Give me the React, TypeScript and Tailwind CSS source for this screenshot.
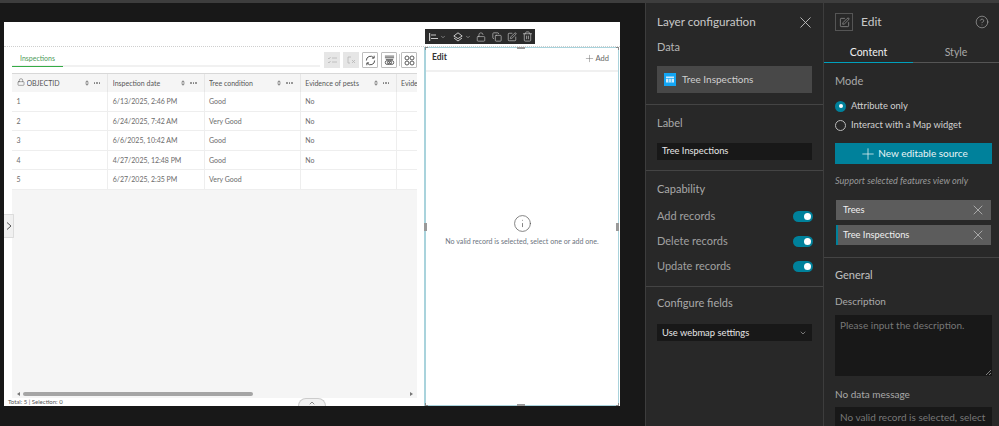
import React from "react";
import { Plus, X, ChevronDown, ChevronUp, Info, Lock, LockOpen, Copy, Trash2, SquarePen, CircleHelp } from "lucide-react";

const rows = [
  ["1", "6/13/2025, 2:46 PM", "Good", "No"],
  ["2", "6/24/2025, 7:42 AM", "Very Good", "No"],
  ["3", "6/6/2025, 10:42 AM", "Good", "No"],
  ["4", "4/27/2025, 12:48 PM", "Good", "No"],
  ["5", "6/27/2025, 2:35 PM", "Very Good", ""],
];

function HeadCell({ label, lock }: { label: string; lock?: boolean }) {
  return (
    <div className="w-[96.25px] shrink-0 h-full flex items-center pl-[4.5px] pr-[7px] border-r border-[#e6e6e6] text-[#555]">
      {lock && <Lock size={8} strokeWidth={1.5} className="mr-[2px] -mt-[2px] text-[#555]" />}
      <span className="flex-1 truncate">{label}</span>
      <span className="flex flex-col mr-[5px]">
        <svg width="4" height="6" viewBox="0 0 5 7"><path d="M2.5 0L5 3H0zM2.5 7L0 4h5z" fill="#888" /></svg>
      </span>
      <span className="flex gap-[1px]">
        <i className="w-[1.5px] h-[1.5px] rounded-full bg-[#777]" />
        <i className="w-[1.5px] h-[1.5px] rounded-full bg-[#777]" />
        <i className="w-[1.5px] h-[1.5px] rounded-full bg-[#777]" />
      </span>
    </div>
  );
}

function ToolBtn({ children, disabled }: { children: React.ReactNode; disabled?: boolean }) {
  return (
    <div className={disabled ? "w-[16px] h-[16px] bg-[#e6e6e6] flex items-center justify-center" : "w-[16px] h-[16px] bg-white border border-[#bdbdbd] rounded-[1px] flex items-center justify-center"}>
      {children}
    </div>
  );
}

function Toggle({ label }: { label: string }) {
  return (
    <div className="flex items-center justify-between h-[25.3px] text-[11px]">
      <span className="text-[#a0a0a0]">{label}</span>
      <span className="w-[20px] h-[11px] rounded-full bg-[#00819b] flex items-center justify-end pr-[2px]">
        <i className="w-[7px] h-[7px] rounded-full bg-white" />
      </span>
    </div>
  );
}

function Chip({ label, active }: { label: string; active?: boolean }) {
  return (
    <div className={`h-[20px] shrink-0 bg-[#5c5c5c] flex items-center justify-between pr-[5px] text-[#f0f0f0] text-[9.3px] ${active ? "border-l-2 border-[#00819b] pl-[5px]" : "pl-[7px]"}`}>
      <span>{label}</span>
      <X size={16} strokeWidth={1} className="text-[#cfcfcf]" />
    </div>
  );
}

function Corner({ className }: { className: string }) {
  return <i className={`absolute w-[3px] h-[3px] border-[#888] ${className}`} />;
}

export default function App() {
  return (
    <div className="w-[999px] h-[426px] overflow-hidden bg-[#181818] flex flex-col text-[10px] font-['Lato','Noto_Sans',sans-serif]">
      <div className="h-[3px] shrink-0 bg-[#3d3d3d]" />
      <div className="flex-1 flex min-h-0">
        {/* canvas */}
        <div className="w-[645px] shrink-0 pl-[4px] pt-[19px]">
          <div className="relative w-[616px] h-[384px] bg-white flex flex-col text-[7px]">
            <div className="h-[25px] shrink-0 border-b border-dotted border-[#cfcfcf]" />
            <div className="flex-1 flex min-h-0">
              {/* table widget */}
              <div className="w-[420px] shrink-0 flex flex-col">
                <div className="flex-1 flex flex-col pl-[8px] pr-[7px] min-h-0">
                  <div className="h-[26px] shrink-0 flex items-start pt-[5px]">
                    <div className="flex-1 h-[15px] flex border-b-[2px] border-[#f1f1f1] mr-[4px]">
                      <div className="w-[51px] h-[15px] border-b-[1.5px] border-[#35ac46] text-center text-[#4d9a57] leading-[12px]">Inspections</div>
                    </div>
                    <div className="flex items-center">
                      <div className="flex gap-[3px]">
                        <ToolBtn disabled><svg width="9" height="7" viewBox="0 0 9 7" fill="none" stroke="#b5b5b5" strokeWidth="0.8"><path d="M0 1l1 1 1.5-2M4 1h5M0 5l1 1 1.5-2M4 5h5" /></svg></ToolBtn>
                        <ToolBtn disabled><svg width="8" height="8" viewBox="0 0 8 8" fill="none" stroke="#b5b5b5" strokeWidth="0.8"><path d="M4 1H1v6h2M5 4l3 3M8 4L5 7" /></svg></ToolBtn>
                        <ToolBtn>
                          <svg width="11" height="11" viewBox="0 0 12 12" fill="none" stroke="#444" strokeWidth="1"><path d="M1.5 6A4.5 4.5 0 0 1 9.5 3M10.5 6A4.5 4.5 0 0 1 2.5 9" /><path d="M10 .8V3.4H7.6M2 11.2V8.6h2.4" /></svg>
                        </ToolBtn>
                        <ToolBtn>
                          <svg width="11" height="11" viewBox="0 0 12 12" fill="none" stroke="#444" strokeWidth="0.9"><path d="M1 1.2h10M1 3h10M2 4.8h8" /><circle cx="3.6" cy="8.2" r="2.2" /><circle cx="6" cy="8.2" r="2.2" /><circle cx="8.4" cy="8.2" r="2.2" /></svg>
                        </ToolBtn>
                      </div>
                      <span className="w-px h-[12px] bg-[#ccc] mx-[1.5px]" />
                      <ToolBtn>
                        <svg width="11" height="11" viewBox="0 0 10 10" fill="none" stroke="#444" strokeWidth="0.8"><circle cx="2.7" cy="2.7" r="1.8" /><circle cx="7.3" cy="2.7" r="1.8" /><circle cx="2.7" cy="7.3" r="1.8" /><circle cx="7.3" cy="7.3" r="1.8" /></svg>
                      </ToolBtn>
                    </div>
                  </div>
                  <div className="flex-1 bg-[#f5f5f5] relative overflow-hidden">
                    <div className="h-[19px] bg-[#f5f5f5] border-t border-[#d8d8d8] flex whitespace-nowrap">
                      <HeadCell label="OBJECTID" lock />
                      <HeadCell label="Inspection date" />
                      <HeadCell label="Tree condition" />
                      <HeadCell label="Evidence of pests" />
                      <div className="pl-[4px] flex items-center text-[#555]">Evide</div>
                    </div>
                    {rows.map((r) => (
                      <div key={r[0]} className="h-[19.6px] bg-white border-b border-[#eeeeee] flex text-[#6b6b6b]">
                        {r.map((c, i) => (
                          <div key={i} className="w-[96.25px] shrink-0 pl-[4.5px] flex items-center border-r border-[#eeeeee]">{c}</div>
                        ))}
                        <div className="flex-1" />
                      </div>
                    ))}
                    <div className="absolute left-0 right-0 bottom-[1px] h-[6px] flex items-center">
                      <span className="w-0 h-0 ml-[5px] border-y-[2.5px] border-y-transparent border-r-[3px] border-r-[#777]" />
                      <span className="ml-[3px] w-[230px] h-[4px] rounded-full bg-[#a5a5a5]" />
                      <span className="flex-1" />
                      <span className="w-0 h-0 mr-[4px] border-y-[2.5px] border-y-transparent border-l-[3px] border-l-[#777]" />
                    </div>
                  </div>
                </div>
                <div className="h-[8px] shrink-0 pl-[4px] text-[6px] leading-[8px] text-[#555] bg-white">Total: 5 | Selection: 0</div>
              </div>
              {/* edit widget */}
              <div className="flex-1 mr-[1px] border-l-2 border-r border-y border-[#a9d3dc] flex flex-col relative">
                <div className="h-[24px] shrink-0 border-b-2 border-[#f0f0f0] flex items-start justify-between pl-[6px] pr-[9px] pt-[3px]">
                  <span className="text-[8.5px] font-bold text-[#333]">Edit</span>
                  <span className="flex items-center gap-[1px] text-[#666] text-[7.5px] mt-[2px]"><Plus size={11} strokeWidth={1} />Add</span>
                </div>
                <div className="flex-1 flex flex-col items-center pt-[142px] text-[#6c7480]">
                  <Info size={19} strokeWidth={0.9} className="text-[#555]" />
                  <div className="mt-[4px] text-[7.1px]">No valid record is selected, select one or add one.</div>
                </div>
                <i className="absolute -left-[2px] top-[175px] w-[3px] h-[8px] bg-[#999]" />
                <i className="absolute -right-[1px] top-[175px] w-[3px] h-[8px] bg-[#999]" />
                <i className="absolute left-[91px] -top-[1px] w-[8px] h-[2px] bg-[#999]" />
                <i className="absolute left-[91px] -bottom-[1px] w-[8px] h-[2px] bg-[#999]" />
                <Corner className="-left-[1px] -top-[1px] border-l border-t" />
                <Corner className="-right-[1px] -top-[1px] border-r border-t" />
                <Corner className="-left-[1px] -bottom-[1px] border-l border-b" />
                <Corner className="-right-[1px] -bottom-[1px] border-r border-b" />
              </div>
            </div>
            {/* side handle */}
            <div className="absolute left-0 top-[192px] w-[10px] h-[24px] bg-[#f0f0f0] border border-l-0 border-[#dcdcdc] rounded-r-[1px] flex items-center justify-center">
              <svg width="6" height="8" viewBox="0 0 6 8" fill="none" stroke="#555" strokeWidth="1"><path d="M1 .5L5 4 1 7.5" /></svg>
            </div>
            {/* bottom handle */}
            <div className="absolute left-[294px] bottom-0 w-[28px] h-[8px] bg-[#f1f1f1] border border-b-0 border-[#ccc] rounded-t-full flex items-center justify-center">
              <ChevronUp size={8} className="text-[#555]" />
            </div>
            {/* floating toolbar */}
            <div className="absolute left-[421px] top-[7px] w-[110px] h-[15px] bg-[#2b2b2b] flex items-center pl-[4px] text-[#c8c8c8]">
              <svg width="9" height="8" viewBox="0 0 9 8" fill="none" stroke="#c8c8c8" strokeWidth="1.2"><path d="M.6 0v8M2 2h5M2 5.5h7" /></svg>
              <ChevronDown size={6} className="ml-[2px]" />
              <svg className="ml-[7px]" width="10" height="10" viewBox="0 0 10 10" fill="none" stroke="#c8c8c8" strokeWidth="1"><path d="M5 .8L9.2 4 5 6.6.8 4zM1 6l4 3 4-3" /></svg>
              <ChevronDown size={6} className="ml-[2px]" />
              <LockOpen size={10} strokeWidth={1.5} className="ml-[5px]" />
              <Copy size={10} strokeWidth={1.6} className="ml-[6px]" />
              <SquarePen size={10} strokeWidth={1.6} className="ml-[5px]" />
              <Trash2 size={11} strokeWidth={1.5} className="ml-[5px]" />
            </div>
          </div>
        </div>
        {/* layer config */}
        <div className="w-[179px] shrink-0 bg-[#282828] border-x border-[#3d3d3d] text-[#a8a8a8] flex flex-col">
          <div className="pt-[11px] px-[11px] pb-[11px] border-b border-[#444]">
            <div className="flex items-center justify-between h-[16px] text-[11.7px] text-[#c8c8c8]">
              <span>Layer configuration</span>
              <X size={19} strokeWidth={1.1} className="text-[#c8c8c8] -mr-[3px]" />
            </div>
            <div className="mt-[9px] text-[11px] text-[#b5b5b5]">Data</div>
            <div className="mt-[10px] h-[27px] bg-[#484848] flex items-center pl-[7px] text-[10px] text-[#cfcfcf]">
              <svg className="mr-[6px]" width="12" height="13" viewBox="0 0 12 13"><rect width="12" height="13" fill="#12a5f4" /><rect x="2" y="3.5" width="8" height="6" fill="#cdeafc" /><path d="M2 5.5h8M4.7 5.5v4M7.3 5.5v4" stroke="#12a5f4" strokeWidth="0.7" /></svg>
              Tree Inspections
            </div>
          </div>
          <div className="pt-[10px] px-[11px] pb-[10px] border-b border-[#444]">
            <div className="text-[11px] leading-[16px]">Label</div>
            <div className="mt-[12px] h-[17px] bg-[#181818] flex items-center pl-[5px] text-[9.3px] text-[#e6e6e6]">Tree Inspections</div>
          </div>
          <div className="pt-[10px] pl-[11px] pr-[10px] pb-[7px] border-b border-[#444]">
            <div className="text-[11px] leading-[16px] mb-[7px]">Capability</div>
            <Toggle label="Add records" />
            <Toggle label="Delete records" />
            <Toggle label="Update records" />
          </div>
          <div className="pt-[8px] px-[11px]">
            <div className="text-[11px] leading-[16px]">Configure fields</div>
            <div className="mt-[13px] h-[17px] bg-[#181818] flex items-center justify-between pl-[5px] pr-[5px] text-[9.4px] text-[#e6e6e6]">
              Use webmap settings
              <ChevronDown size={8} className="text-[#a8a8a8]" />
            </div>
          </div>
        </div>
        {/* edit panel */}
        <div className="flex-1 bg-[#282828] text-[#a8a8a8] flex flex-col overflow-hidden">
          <div className="h-[29px] shrink-0 mt-[10px] flex items-start pl-[11px] pr-[8px]">
            <span className="w-[18px] h-[18px] border border-[#555] flex items-center justify-center text-[#bbb]"><SquarePen size={11} strokeWidth={1.2} /></span>
            <span className="ml-[8px] text-[12px] leading-[18px] text-[#c8c8c8]">Edit</span>
            <span className="flex-1" />
            <CircleHelp size={14} strokeWidth={1} className="mt-[2px] mr-[2px] text-[#bbb]" />
          </div>
          <div className="flex h-[21px] shrink-0 text-[10.5px] border-b border-[#555]">
            <div className="w-[89px] text-center text-[#f0f0f0] border-b border-[#00a0bd] leading-[20px] h-[21px]">Content</div>
            <div className="flex-1 text-center leading-[20px]">Style</div>
          </div>
          <div className="px-[11px] shrink-0">
            <div className="mt-[10px] text-[11px] leading-[16px]">Mode</div>
            <div className="mt-[11px] flex items-center h-[12px] text-[9.4px] text-[#d0d0d0]">
              <span className="w-[11px] h-[11px] rounded-full bg-[#00819b] flex items-center justify-center mr-[5px]"><i className="w-[4px] h-[4px] rounded-full bg-white" /></span>
              Attribute only
            </div>
            <div className="mt-[7px] flex items-center h-[12px] text-[9.4px] text-[#d0d0d0]">
              <span className="w-[11px] h-[11px] rounded-full border border-[#bbb] mr-[5px]" />
              Interact with a Map widget
            </div>
            <div className="mt-[12px] h-[21px] w-[157px] bg-[#00819b] flex items-center justify-center text-[#e8f4f6] text-[10px]">
              <Plus size={18} strokeWidth={1} className="mr-[1px]" />New editable source
            </div>
            <div className="mt-[11px] italic text-[9.1px] leading-[12px] text-[#999]">Support selected features view only</div>
            <div className="mt-[13px] ml-[1px] w-[155px] flex flex-col gap-[5px]">
              <Chip label="Trees" />
              <Chip label="Tree Inspections" active />
            </div>
          </div>
          <div className="mt-[12px] shrink-0 border-t border-[#444] px-[11px] pt-[9px]">
            <div className="text-[11px] leading-[16px] text-[#c0c0c0]">General</div>
            <div className="mt-[11px] leading-[14px]">Description</div>
            <div className="mt-[7px] w-[157px] h-[61px] bg-[#181818] relative px-[5px] pt-[3px] text-[#777] leading-[14px]">
              Please input the description.
              <svg className="absolute right-[1px] bottom-[1px]" width="5" height="5" viewBox="0 0 5 5" stroke="#aaa" strokeWidth="0.7"><path d="M0 5L5 0M3 5L5 3" /></svg>
            </div>
            <div className="mt-[11px] leading-[14px]">No data message</div>
            <div className="mt-[6px] w-[157px] h-[30px] bg-[#181818] px-[5px] pt-[3px] text-[#777] leading-[14px] whitespace-nowrap overflow-hidden">No valid record is selected, select</div>
          </div>
        </div>
      </div>
    </div>
  );
}
